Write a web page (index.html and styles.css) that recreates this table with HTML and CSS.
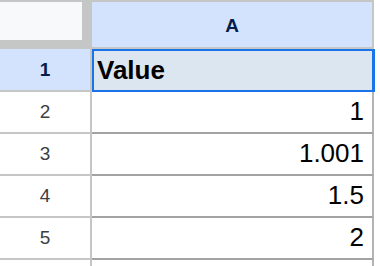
FILE: index.html
```html
<!DOCTYPE html>
<html>
<head>
<meta charset="utf-8">
<link rel="stylesheet" href="styles.css">
</head>
<body>
<div class="sheet">
  <div class="corner"><div class="corner-box"></div></div>
  <div class="colhead"><span class="hlabel">A</span></div>

  <div class="rowhead rowhead-sel"><span class="rlabel">1</span></div>
  <div class="cell cell-sel">Value</div>

  <div class="rowhead"><span class="rlabel">2</span></div>
  <div class="cell num">1</div>

  <div class="rowhead"><span class="rlabel">3</span></div>
  <div class="cell num">1.001</div>

  <div class="rowhead"><span class="rlabel">4</span></div>
  <div class="cell num">1.5</div>

  <div class="rowhead"><span class="rlabel">5</span></div>
  <div class="cell num">2</div>

  <div class="rowhead last"></div>
  <div class="cell last"></div>
</div>
</body>
</html>
```

FILE: styles.css
```css
html, body {
  margin: 0;
  padding: 0;
  background: #ffffff;
  overflow: hidden;
}

.sheet {
  display: grid;
  grid-template-columns: 92px 282px;
  grid-template-rows: 49px 43px 42px 42px 42px 42px 6px;
  font-family: "Liberation Sans", Arial, sans-serif;
}

.corner {
  background: #c4c7c5;
  padding-top: 2px;
  box-sizing: border-box;
}

.corner-box {
  width: 82px;
  height: 38px;
  background: #f8f9fa;
}

.colhead {
  background: #d3e3fd;
  border-top: 2px solid #c4c7c5;
  border-bottom: 2px solid #c4c7c5;
  border-right: 2px solid #c4c7c5;
  display: flex;
  align-items: center;
  justify-content: center;
  padding-top: 2px;
}

.hlabel {
  font-weight: 700;
  font-size: 19px;
  color: #041e49;
}

.rowhead {
  border-right: 2px solid #c4c7c5;
  border-bottom: 2px solid #c4c7c5;
  display: flex;
  align-items: center;
  justify-content: center;
  background: #ffffff;
}

.rlabel {
  font-size: 19px;
  color: #3c4043;
}

.rowhead-sel {
  background: #d3e3fd;
}

.rowhead-sel .rlabel {
  font-weight: 700;
  color: #041e49;
}

.cell {
  border-right: 2px solid #b4b4b4;
  border-bottom: 2px solid #a3a3a3;
  display: flex;
  align-items: center;
  padding: 0 8px 2px 4px;
  font-size: 26px;
  color: #000000;
}

.num {
  justify-content: flex-end;
}

.cell-sel {
  background: #dce6f1;
  border: 2px solid #1a73e8;
  border-right-width: 3px;
  margin-right: -1px;
  font-weight: 700;
  padding: 0 4px 0 3px;
}

.last {
  border-bottom: none;
}
```
